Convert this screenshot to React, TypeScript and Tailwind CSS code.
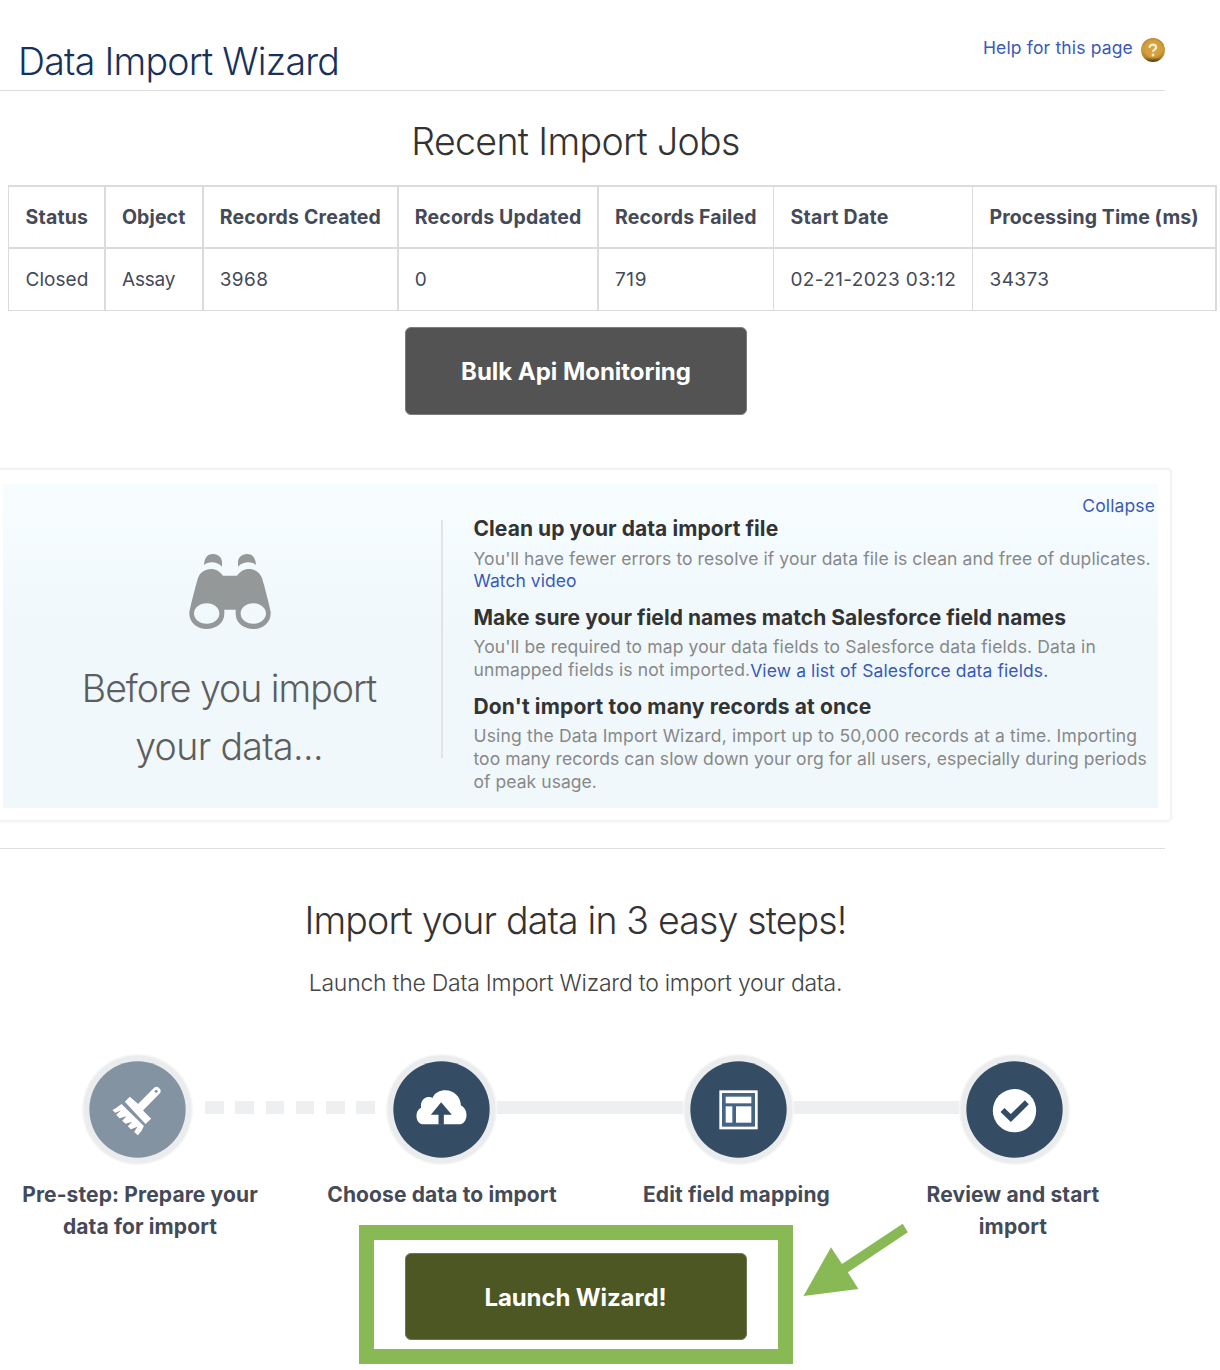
import type { ReactNode } from "react";

const DARK = "#344c64";

const columns = [
  { label: "Status", value: "Closed", cell: "border-l pl-[16.5px]", th: "tracking-[0.2px]", tv: "tracking-[0.05px]" },
  { label: "Object", value: "Assay", cell: "border-l-2 pl-4", th: "tracking-[0.1px]", tv: "tracking-[-0.2px]" },
  { label: "Records Created", value: "3968", cell: "border-l-2 pl-[15.7px]", th: "tracking-[0.17px]", tv: "tracking-[0.45px]" },
  { label: "Records Updated", value: "0", cell: "border-l-2 pl-[15.7px]", th: "tracking-[0.19px]", tv: "tracking-[0.45px]" },
  { label: "Records Failed", value: "719", cell: "border-l-2 pl-4", th: "tracking-[0.13px]", tv: "tracking-[0.6px]" },
  { label: "Start Date", value: "02-21-2023 03:12", cell: "border-l pl-[16.5px]", th: "tracking-[0.27px]", tv: "tracking-[0.36px]" },
  { label: "Processing Time (ms)", value: "34373", cell: "border-l pl-[16.5px]", th: "tracking-[0.09px]", tv: "tracking-[0.4px]" },
];

const gridCols = "grid grid-cols-[96px_98px_195px_200px_176px_199px_245px]";

function JobsTable() {
  return (
    <div className="ml-2 w-[1209px] whitespace-nowrap border-r-2 border-[#dbdbdb] text-[#444a57]">
      <div className={`${gridCols} h-[62px] border-t-2 border-[#dbdbdb]`}>
        {columns.map((c) => (
          <div key={c.label} className={`${c.cell} ${c.th} border-[#dbdbdb] text-[19.5px] font-bold leading-[60px]`}>
            {c.label}
          </div>
        ))}
      </div>
      <div className={`${gridCols} h-16 border-t-2 border-b border-[#dbdbdb]`}>
        {columns.map((c) => (
          <div key={c.label} className={`${c.cell} ${c.tv} h-[61px] border-[#dbdbdb] text-[19px] leading-[62px]`}>
            {c.value}
          </div>
        ))}
      </div>
    </div>
  );
}

function HelpIcon() {
  return (
    <svg className="h-6 w-6" viewBox="0 0 24 24">
      <defs>
        <linearGradient id="gold" x1="0" y1="0" x2="0" y2="1">
          <stop offset="0" stopColor="#a87d2c" />
          <stop offset="0.45" stopColor="#cf9d3b" />
          <stop offset="0.8" stopColor="#b5832b" />
          <stop offset="1" stopColor="#4a3a17" />
        </linearGradient>
        <radialGradient id="shine" cx="0.5" cy="0.45" r="0.5">
          <stop offset="0" stopColor="#dba640" />
          <stop offset="0.75" stopColor="#d39f3c" />
          <stop offset="1" stopColor="#cf9d3b" stopOpacity="0" />
        </radialGradient>
      </defs>
      <circle cx="12" cy="12" r="12" fill="url(#gold)" />
      <circle cx="12" cy="11.500" r="11" fill="url(#shine)" />
      <path
        d="M8.600 9.700c0-1.900 1.300-3 3.200-3s3.300 1 3.300 2.700c0 2.100-3 2.200-3 4.400"
        fill="none"
        stroke="#fbf0da"
        strokeWidth="2.200"
      />
      <circle cx="12" cy="17" r="1.400" fill="#fbf0da" />
    </svg>
  );
}

function Binoculars() {
  const eyepiece =
    "M15 11C15.5 3 19 0 24 0C29.5 0 33 4 33 8V12.7C30 9.3 26 8.3 23 8.3C19.500 8.300 16.500 9.500 15 11Z";
  return (
    <svg className="h-[75px] w-[82px]" viewBox="0 0 82 75" fill="#949898">
      <path d={eyepiece} />
      <path d={eyepiece} transform="matrix(-1 0 0 1 82 0)" />
      <path
        fillRule="evenodd"
        d="M9 24C11 18.500 16 15 22 15C27 15 31 17.500 34 21.700H48C51 17.500 55 15 60 15C66 15 71 18.500 73 24C76 34 79 46 81.500 57C83 67.500 74.500 75 64.300 75C54.500 75 46.700 68.500 46.700 60V55.700H35.300V60C35.300 68.500 27.500 75 17.700 75C7.500 75 -1 67.500 0.500 57C3 46 6 34 9 24ZM17.700 49.300C10.600 49.300 5 53.900 5 59.500S10.600 69.700 17.700 69.700S30.400 65.100 30.400 59.500S24.800 49.300 17.700 49.300ZM64.300 49.300C57.200 49.300 51.600 53.900 51.600 59.500S57.200 69.700 64.300 69.700S77 65.100 77 59.500S71.400 49.300 64.300 49.300Z"
      />
    </svg>
  );
}

function StepCircle({ left, fill, children }: { left: number; fill: string; children: ReactNode }) {
  return (
    <svg className="h-[111px] w-[111px] shrink-0" viewBox={`${left} 40 333 333`}>
      <circle cx={left + 166.5} cy="206.500" r="166.500" fill="#f5f6f7" />
      <circle cx={left + 166.5} cy="206.500" r="162" fill="#eaecee" />
      <circle cx={left + 166.5} cy="206.500" r="144.500" fill={fill} />
      {children}
    </svg>
  );
}

function Steps() {
  return (
    <div className="flex items-center pl-[82px]">
      <StepCircle left={36.5} fill="#8493a2">
        <g fill="#fff">
          <path d="M205 207L260 151" stroke="#fff" strokeWidth="24" strokeLinecap="round" />
          <circle cx="259" cy="152" r="4.500" fill="#8493a2" />
          <path d="M180 168L205 190L223 213L244 234L227 250L165 183Z" />
          <path d="M155 190L222 256Q216 274 204 284L193 274L203 258L183 266L174 257L187 243L167 249L157 240L170 227L149 233L139 222L154 209L136 216L128 208Q140 202 155 190Z" />
        </g>
      </StepCircle>
      <div className="flex w-[193px] justify-between pl-3 pr-[11px]">
        {[0, 1, 2, 3, 4, 5].map((i) => (
          <div key={i} className="-mt-[4px] h-[13px] w-[18.5px] bg-[#eeeff1]" />
        ))}
      </div>
      <StepCircle left={18.5} fill={DARK}>
        <path
          fill="#fff"
          d="M132 251C118 251 110 240 110 226C110 212 116 205 124 201C120 184 132 168 147 169C152 169 155 170 158 172C164 157 180 149 197 149C222 149 243 169 243 194C254 200 260 210 260 222C260 240 250 251 238 251Z"
        />
        <path fill={DARK} d="M184 185L216 222H192V252H176V222H153Z" />
      </StepCircle>
      <div className="-mt-[4px] h-[13px] w-[186px] bg-[#eeeff1]" />
      <StepCircle left={39} fill={DARK}>
        <rect x="148" y="149" width="115" height="117" fill="#fff" />
        <rect x="156" y="157" width="99" height="101" fill="#466483" />
        <rect x="167" y="168" width="77" height="20" fill="#fff" />
        <rect x="167" y="197" width="20" height="49" fill="#fff" />
        <rect x="198" y="197" width="46" height="49" fill="#fff" />
      </StepCircle>
      <div className="-mt-[4px] h-[13px] w-[165px] bg-[#eeeff1]" />
      <StepCircle left={26.5} fill={DARK}>
        <circle cx="193" cy="210" r="65" fill="#fff" />
        <path d="M157 208L182 232L230 185" fill="none" stroke={DARK} strokeWidth="17" />
      </StepCircle>
    </div>
  );
}

const link = "text-[#3a59b8]";
const thin = "text-[37.5px] font-light";

function Tip({ title, track, gap, children }: { title: string; track: string; gap: string; children: ReactNode }) {
  return (
    <section className="h-[89px]">
      <h3 className={`${track} text-[21px] font-bold leading-[30px] text-[#333]`}>{title}</h3>
      <div className={`${gap} text-[17.5px] leading-[23px] text-[#888]`}>{children}</div>
    </section>
  );
}

function BeforePanel() {
  return (
    <div className="-ml-2 w-[1180px] rounded-[5px] border-2 border-[#f3f3f5] bg-white pb-[12px] pl-[9px] pr-[12px] pt-[14px] shadow-[0_0_3px_rgba(0,0,0,0.05)]">
      <div className="flex h-[324px] whitespace-nowrap bg-linear-to-b from-[#f7fdff] to-[#f0f8fc] to-45%">
        <div className="flex w-[438px] flex-col pt-[70px]">
          <div className="pl-[186px]">
            <Binoculars />
          </div>
          <div className={`${thin} pl-[14px] pt-[31px] text-center leading-[58px] text-[#5e5e5e]`}>
            <div className="tracking-[-1.04px]">Before you import</div>
            <div className="tracking-[-0.64px]">your data...</div>
          </div>
        </div>
        <div className="mt-[36px] h-[238px] w-[2px] bg-[#e0e4e7]" />
        <div className="relative flex-1 pl-[30.500px] pt-[30px]">
          <a className={`${link} absolute right-[3px] top-[10px] text-[17.5px] leading-[24px] tracking-[0.12px]`}>
            Collapse
          </a>
          <Tip title="Clean up your data import file" track="tracking-[0.07px]" gap="pt-[3px]">
            <div className="tracking-[0.086px]">
              You'll have fewer errors to resolve if your data file is clean and free of duplicates.
            </div>
            <div className={`${link} -mt-px tracking-[0.05px]`}>Watch video</div>
          </Tip>
          <Tip title="Make sure your field names match Salesforce field names" track="tracking-[0.035px]" gap="pt-[2px]">
            <div className="tracking-[0.136px]">
              You'll be required to map your data fields to Salesforce data fields. Data in
            </div>
            <div className="flex">
              <span className="tracking-[0.141px]">unmapped fields is not imported.</span>
              <span className={`${link} pt-px tracking-[0.1px]`}>View a list of Salesforce data fields.</span>
            </div>
          </Tip>
          <Tip title="Don't import too many records at once" track="tracking-[0.15px]" gap="pt-[2px]">
            <div className="tracking-[0.17px]">
              Using the Data Import Wizard, import up to 50,000 records at a time. Importing
            </div>
            <div className="tracking-[0.07px]">
              too many records can slow down your org for all users, especially during periods
            </div>
            <div className="tracking-[0.05px]">of peak usage.</div>
          </Tip>
        </div>
      </div>
    </div>
  );
}

export default function App() {
  return (
    <div className="relative h-[1370px] w-[1220px] overflow-hidden bg-white font-[Inter,sans-serif]">
      <header className="flex h-[91px] w-[1165px] justify-between whitespace-nowrap border-b border-[#dcdcdc] pl-[18px]">
        <h1 className={`${thin} pt-[38px] leading-[48px] tracking-[-0.75px] text-[#16325c]`}>Data Import Wizard</h1>
        <div className="flex items-start gap-2 pt-[38px]">
          <a className={`${link} -mt-[2px] text-[17.5px] leading-[24px] tracking-[0.16px]`}>Help for this page</a>
          <HelpIcon />
        </div>
      </header>

      <h2 className={`${thin} w-[1151px] pt-[27px] text-center leading-[48px] tracking-[-0.65px] text-[#333]`}>
        Recent Import Jobs
      </h2>
      <div className="mt-[19px]">
        <JobsTable />
      </div>

      <div className="mt-4 flex w-[1152px] justify-center">
        <button className="h-[88px] w-[342px] rounded-[6px] border border-[#7c7c7c] bg-[#535353] pt-[2px] text-[24px] font-bold tracking-[-0.04px] text-white">
          Bulk Api Monitoring
        </button>
      </div>

      <div className="mt-[53px]">
        <BeforePanel />
      </div>
      <div className="mt-[26px] h-px w-[1165px] bg-[#dfdfe3]" />

      <h2 className={`${thin} w-[1151px] pt-[48px] text-center leading-[48px] tracking-[-0.84px] text-[#333]`}>
        Import your data in 3 easy steps!
      </h2>
      <p className="w-[1151px] pt-[22px] text-center text-[23px] font-light leading-[32px] tracking-[-0.25px] text-[#444]">
        Launch the Data Import Wizard to import your data.
      </p>

      <div className="mt-[55px]">
        <Steps />
      </div>
      <div className="mt-[14px] flex h-[46px] whitespace-nowrap text-center text-[21px] font-bold leading-[32px] tracking-[0.12px] text-[#444a57]">
        <div className="w-[280px]">
          Pre-step: Prepare your
          <br />
          data for import
        </div>
        <div className="w-[324px]">Choose data to import</div>
        <div className="w-[265px]">Edit field mapping</div>
        <div className="w-[288px]">
          Review and start
          <br />
          import
        </div>
      </div>

      <div className="ml-[358.500px] flex h-[139px] w-[434px] justify-center border-[15px] border-[#88b954] pt-[13px]">
        <button className="h-[87px] w-[342px] shrink-0 rounded-[6px] border border-[#6f7750] bg-[#4d5723] pt-[2px] text-[24px] font-bold tracking-[-0.118px] text-white">
          Launch Wizard!
        </button>
      </div>
      <svg className="absolute left-[803px] top-[1223px] h-[74px] w-[106px]" viewBox="803 1223 106 74">
        <path
          fill="#88b954"
          d="M803.500 1296L831 1247.300L842 1264L902.700 1223.700L907.800 1232.300L847.800 1272.300L858.400 1289Z"
        />
      </svg>
    </div>
  );
}
